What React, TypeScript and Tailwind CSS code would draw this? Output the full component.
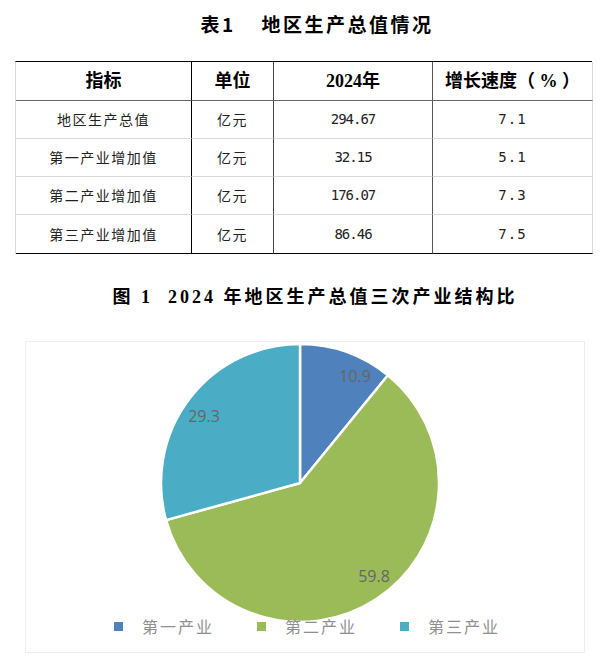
const rows = [
  { name: "地区生产总值", unit: "亿元", value: "294.67", growth: "7.1" },
  { name: "第一产业增加值", unit: "亿元", value: "32.15", growth: "5.1" },
  { name: "第二产业增加值", unit: "亿元", value: "176.07", growth: "7.3" },
  { name: "第三产业增加值", unit: "亿元", value: "86.46", growth: "7.5" },
];

const cjk = "font-['Noto_Sans_CJK_SC',sans-serif]";
const serif = "font-['Liberation_Serif','Noto_Sans_CJK_SC',serif]";
const mono = "font-['DejaVu_Sans_Mono',monospace]";

const PieChart = () => {
  // centre and radius inside the chart frame
  return (
    <svg width="558" height="310" viewBox="0 0 558 310">
      <g stroke="#ffffff" strokeWidth="2.5" strokeLinejoin="round">
        <path d="M274 141 L274 2 A139 139 0 0 1 361.9 33.3 Z" fill="#4F81BD" />
        <path d="M274 141 L361.9 33.3 A139 139 0 1 1 140.05 178.1 Z" fill="#9BBB59" />
        <path d="M274 141 L140.05 178.1 A139 139 0 0 1 274 2 Z" fill="#4BACC6" />
      </g>
      <g fontFamily="'Open Sans', 'DejaVu Sans', sans-serif" fontSize="16" fill="#666666" textAnchor="middle">
        <text x="329" y="40">10.9</text>
        <text x="178" y="80">29.3</text>
        <text x="348" y="240">59.8</text>
      </g>
      {/* legend */}
      <g fontFamily="'Noto Sans CJK SC', sans-serif" fontSize="16" fill="#8f8f8f" letterSpacing="2">
        <rect x="88" y="280" width="9" height="9" fill="#4F81BD" />
        <text x="116" y="291">第一产业</text>
        <rect x="231" y="280" width="9" height="9" fill="#9BBB59" />
        <text x="259" y="291">第二产业</text>
        <rect x="374" y="280" width="9" height="9" fill="#4BACC6" />
        <text x="402" y="291">第三产业</text>
      </g>
    </svg>
  );
};

export default function App() {
  const colBorder = ["border-r-black", "border-r-[#444]", "border-r-[#555]", "border-r-[#d9d9d9]"];

  return (
    <div className="w-[610px] h-[661px] bg-white overflow-hidden text-[#111]">
      {/* Table title */}
      <div className="h-[61px] pt-[12px] pl-[24px]">
        <div className={`${cjk} text-[19px] leading-[24px] font-bold tracking-[2.5px] text-center text-black`}>
          表1<span className="ml-[26px]">地区生产总值情况</span>
        </div>
      </div>

      {/* Table */}
      <div className="ml-[15px] w-[577px] grid grid-cols-[176px_82px_159px_160px] border-t border-t-black border-l border-l-[#d9d9d9]">
        {["指标", "单位", "2024年", "增长速度（ % ）"].map((h, i) => (
          <div
            key={h}
            className={`h-[39px] flex items-center justify-center border-r border-b border-b-[#666] ${colBorder[i]} ${serif} font-bold text-[18px] text-black`}
          >
            {h}
          </div>
        ))}
        {rows.map((r, ri) => {
          const last = ri === rows.length - 1;
          const rowCls = `${last ? "h-[39px] border-b-black" : "h-[38px] border-b-[#d9d9d9]"} border-b border-r flex items-center justify-center`;
          return [
            <div key={r.name + "n"} className={`${rowCls} ${colBorder[0]} ${cjk} text-[14px] tracking-[1.5px] text-[#222]`}>
              {r.name}
            </div>,
            <div key={r.name + "u"} className={`${rowCls} ${colBorder[1]} ${cjk} text-[14px] tracking-[1.5px] text-[#222]`}>
              {r.unit}
            </div>,
            <div key={r.name + "v"} className={`${rowCls} ${colBorder[2]} ${mono} text-[14px] tracking-[-1px] text-[#222]`}>
              {r.value}
            </div>,
            <div key={r.name + "g"} className={`${rowCls} ${colBorder[3]} ${mono} text-[14px] tracking-[1px] text-[#222]`}>
              {r.growth}
            </div>,
          ];
        })}
      </div>

      {/* Chart title */}
      <div className="h-[87px] pl-[20px] flex items-center justify-center">
        <div className={`${serif} font-bold text-[18px] tracking-[3px] text-black whitespace-pre`}>
          图 1  2024 年地区生产总值三次产业结构比
        </div>
      </div>

      {/* Chart */}
      <div className="ml-[25px] w-[560px] h-[312px] border border-[#eeeeee]">
        <PieChart />
      </div>
    </div>
  );
}
